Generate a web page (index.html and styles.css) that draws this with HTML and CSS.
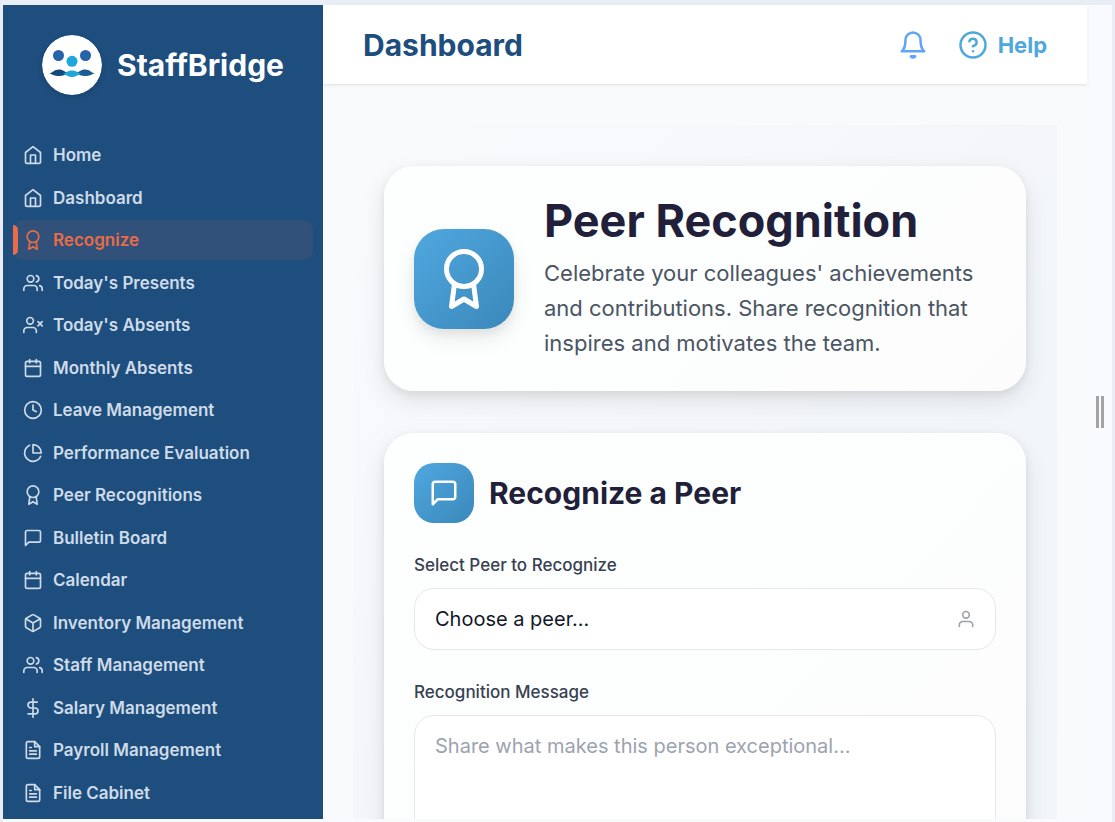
FILE: index.html
```html
<!DOCTYPE html>
<html lang="en">
<head>
<meta charset="utf-8">
<meta name="viewport" content="width=device-width, initial-scale=1">
<title>StaffBridge – Peer Recognition</title>
<link rel="stylesheet" href="styles.css">
</head>
<body>
<svg class="sprite" aria-hidden="true">
  <symbol id="home" viewBox="0 0 24 24"><path d="M3 9l9-7 9 7v11a2 2 0 0 1-2 2H5a2 2 0 0 1-2-2z"/><path d="M9 22V12h6v10"/></symbol>
  <symbol id="award" viewBox="0 0 24 24"><circle cx="12" cy="8" r="7"/><path d="M8.21 13.89L7 23l5-3 5 3-1.21-9.12"/></symbol>
  <symbol id="users" viewBox="0 0 24 24"><path d="M17 21v-2a4 4 0 0 0-4-4H5a4 4 0 0 0-4 4v2"/><circle cx="9" cy="7" r="4"/><path d="M23 21v-2a4 4 0 0 0-3-3.87M16 3.13a4 4 0 0 1 0 7.75"/></symbol>
  <symbol id="user-x" viewBox="0 0 24 24"><path d="M16 21v-2a4 4 0 0 0-4-4H5a4 4 0 0 0-4 4v2"/><circle cx="8.5" cy="7" r="4"/><path d="M18 8l5 5M23 8l-5 5"/></symbol>
  <symbol id="calendar" viewBox="0 0 24 24"><rect x="3" y="4" width="18" height="18" rx="2"/><path d="M16 2v4M8 2v4M3 10h18"/></symbol>
  <symbol id="clock" viewBox="0 0 24 24"><circle cx="12" cy="12" r="10"/><path d="M12 6v6l4 2"/></symbol>
  <symbol id="pie" viewBox="0 0 24 24"><path d="M21.21 15.89A10 10 0 1 1 8 2.83"/><path d="M22 12A10 10 0 0 0 12 2v10z"/></symbol>
  <symbol id="message" viewBox="0 0 24 24"><path d="M21 15a2 2 0 0 1-2 2H7l-4 4V5a2 2 0 0 1 2-2h14a2 2 0 0 1 2 2z"/></symbol>
  <symbol id="box" viewBox="0 0 24 24"><path d="M21 16V8a2 2 0 0 0-1-1.73l-7-4a2 2 0 0 0-2 0l-7 4A2 2 0 0 0 3 8v8a2 2 0 0 0 1 1.73l7 4a2 2 0 0 0 2 0l7-4A2 2 0 0 0 21 16z"/><path d="M3.27 6.96L12 12.01l8.73-5.05M12 22.08V12"/></symbol>
  <symbol id="dollar" viewBox="0 0 24 24"><path d="M12 1v22M17 5H9.500a3.500 3.500 0 0 0 0 7h5a3.500 3.500 0 0 1 0 7H6"/></symbol>
  <symbol id="file" viewBox="0 0 24 24"><path d="M14 2H6a2 2 0 0 0-2 2v16a2 2 0 0 0 2 2h12a2 2 0 0 0 2-2V8z"/><path d="M14 2v6h6M16 13H8M16 17H8M10 9H8"/></symbol>
  <symbol id="user" viewBox="0 0 24 24"><path d="M20 21v-2a4 4 0 0 0-4-4H8a4 4 0 0 0-4 4v2"/><circle cx="12" cy="7" r="4"/></symbol>
  <symbol id="bell" viewBox="0 0 24 24"><path d="M18 8A6 6 0 0 0 6 8c0 7-3 9-3 9h18s-3-2-3-9"/><path d="M13.730 21a2 2 0 0 1-3.460 0z"/></symbol>
  <symbol id="help" viewBox="0 0 24 24"><circle cx="12" cy="12" r="10"/><path d="M9.090 9a3 3 0 0 1 5.830 1c0 2-3 3-3 3M12 17h.01"/></symbol>
</svg>

<div class="app">
  <aside class="sidebar">
    <a class="brand" href="#">
      <svg class="brand-logo" viewBox="0 0 60 60" aria-hidden="true">
        <circle cx="30" cy="30" r="30" fill="#fff"/>
        <circle cx="16.500" cy="20.500" r="5.500" fill="#2563ab"/>
        <circle cx="43.500" cy="20.500" r="5.500" fill="#2563ab"/>
        <circle cx="30" cy="26.300" r="5.500" fill="#1ea7dc"/>
        <path d="M7.500 38.500C11 37.500 12 34.500 17 34.500C21 34.500 23 37 26 38C23 40 21 41 17 41C12 41 11 39.500 7.500 38.500z" fill="#114b7c"/>
        <path d="M52.500 38.500C49 37.500 48 34.500 43 34.500C39 34.500 37 37 34 38C37 40 39 41 43 41C48 41 49 39.500 52.500 38.500z" fill="#195d94"/>
        <path d="M21 38.500C24.500 38 25.500 35.500 30 35.500C34.500 35.500 35.500 38 39 38.500C35.500 39.500 34.500 42 30 42C25.500 42 24.500 39.500 21 38.500z" fill="#1ea7dc"/>
      </svg>
      <span>StaffBridge</span>
    </a>
    <nav class="nav" aria-label="Main">
      <a class="nav-item" href="#"><svg class="icon"><use href="#home"/></svg>Home</a>
      <a class="nav-item" href="#"><svg class="icon"><use href="#home"/></svg>Dashboard</a>
      <a class="nav-item active" href="#" aria-current="page"><svg class="icon"><use href="#award"/></svg>Recognize</a>
      <a class="nav-item" href="#"><svg class="icon"><use href="#users"/></svg>Today's Presents</a>
      <a class="nav-item" href="#"><svg class="icon"><use href="#user-x"/></svg>Today's Absents</a>
      <a class="nav-item" href="#"><svg class="icon"><use href="#calendar"/></svg>Monthly Absents</a>
      <a class="nav-item" href="#"><svg class="icon"><use href="#clock"/></svg>Leave Management</a>
      <a class="nav-item" href="#"><svg class="icon"><use href="#pie"/></svg>Performance Evaluation</a>
      <a class="nav-item" href="#"><svg class="icon"><use href="#award"/></svg>Peer Recognitions</a>
      <a class="nav-item" href="#"><svg class="icon"><use href="#message"/></svg>Bulletin Board</a>
      <a class="nav-item" href="#"><svg class="icon"><use href="#calendar"/></svg>Calendar</a>
      <a class="nav-item" href="#"><svg class="icon"><use href="#box"/></svg>Inventory Management</a>
      <a class="nav-item" href="#"><svg class="icon"><use href="#users"/></svg>Staff Management</a>
      <a class="nav-item" href="#"><svg class="icon"><use href="#dollar"/></svg>Salary Management</a>
      <a class="nav-item" href="#"><svg class="icon"><use href="#file"/></svg>Payroll Management</a>
      <a class="nav-item" href="#"><svg class="icon"><use href="#file"/></svg>File Cabinet</a>
    </nav>
  </aside>

  <div class="content">
    <header class="topbar">
      <div class="topbar-title">Dashboard</div>
      <div class="topbar-actions">
        <button class="bell" type="button" aria-label="Notifications"><svg class="icon icon-md"><use href="#bell"/></svg></button>
        <button class="help" type="button"><svg class="icon icon-md"><use href="#help"/></svg>Help</button>
      </div>
    </header>
    <main class="main">
      <div class="page">
        <section class="card hero">
          <div class="hero-badge"><svg class="icon icon-lg"><use href="#award"/></svg></div>
          <div class="hero-text">
            <h1>Peer Recognition</h1>
            <p>Celebrate your colleagues' achievements and contributions. Share recognition that inspires and motivates the team.</p>
          </div>
        </section>
        <section class="card">
          <div class="card-head">
            <div class="card-badge"><svg class="icon icon-md"><use href="#message"/></svg></div>
            <h2>Recognize a Peer</h2>
          </div>
          <form class="form">
            <div class="field">
              <label for="peer">Select Peer to Recognize</label>
              <div class="select-wrap">
                <select id="peer"><option>Choose a peer...</option></select>
                <svg class="icon select-icon"><use href="#user"/></svg>
              </div>
            </div>
            <div class="field">
              <label for="message-text">Recognition Message</label>
              <textarea id="message-text" placeholder="Share what makes this person exceptional..."></textarea>
            </div>
          </form>
        </section>
      </div>
    </main>
  </div>

  <div class="splitter" role="separator" aria-orientation="vertical"><span></span><span></span></div>
</div>
</body>
</html>
```
FILE: styles.css
```css
* {
  box-sizing: border-box;
}

body {
  margin: 0;
  height: 100vh;
  overflow: hidden;
  display: flex;
  padding: 5px 3px 0;
  background: #e8edf6;
  font-family: Inter, "Liberation Sans", sans-serif;
}

h1, h2, p {
  margin: 0;
}

a {
  text-decoration: none;
}

button {
  display: flex;
  align-items: center;
  gap: 10px;
  padding: 0;
  border: 0;
  background: none;
  font: inherit;
  cursor: pointer;
}

.sprite {
  display: none;
}

.icon {
  flex: none;
  width: 20px;
  height: 20px;
  fill: none;
  stroke: currentColor;
  stroke-width: 2;
  stroke-linecap: round;
  stroke-linejoin: round;
}

.icon-md {
  width: 30px;
  height: 30px;
}

.icon-lg {
  width: 60px;
  height: 60px;
}

.app {
  flex: 1;
  min-width: 0;
  display: flex;
  padding-bottom: 3px;
  background: #f9fafe;
}

/* Sidebar */

.sidebar {
  flex: none;
  width: 320px;
  display: flex;
  flex-direction: column;
  gap: 40px;
  padding: 30px 10px 6px;
  background: #1d4e7e;
}

.brand {
  display: flex;
  align-items: center;
  justify-content: center;
  gap: 15px;
  color: #fff;
  font-size: 30px;
  font-weight: 700;
}

.brand-logo {
  width: 60px;
  height: 60px;
  border-radius: 50%;
  box-shadow: 0 2px 5px rgba(0, 0, 0, 0.15);
}

.nav {
  flex: 1;
  display: flex;
  flex-direction: column;
  justify-content: space-between;
}

.nav-item {
  position: relative;
  display: flex;
  align-items: center;
  gap: 10px;
  height: 40px;
  padding: 0 10px;
  border-radius: 10px;
  color: #cfdbe8;
  font-size: 17px;
  font-weight: 600;
}

.nav-item.active {
  background: #32517a;
  color: #e96c46;
}

.nav-item.active::before {
  content: "";
  position: absolute;
  left: 0;
  top: 5px;
  bottom: 5px;
  width: 5px;
  border-radius: 0 5px 5px 0;
  background: #e96c46;
}

/* Content column */

.content {
  flex: 1;
  min-width: 0;
  display: flex;
  flex-direction: column;
  background: #f9fafc;
}

.topbar {
  flex: none;
  z-index: 1;
  display: flex;
  align-items: center;
  justify-content: space-between;
  height: 80px;
  padding: 0 40px;
  border-bottom: 1px solid #e5e7eb;
  background: #fff;
  box-shadow: 0 1px 3px rgba(0, 0, 0, 0.06);
}

.topbar-title {
  color: #1d4e7e;
  font-size: 30px;
  font-weight: 700;
}

.topbar-actions {
  display: flex;
  align-items: center;
  gap: 30px;
}

.bell {
  color: #60a5fa;
}

.help {
  color: #4fa8dd;
  font-size: 22px;
  font-weight: 700;
}

.main {
  flex: 1;
  min-height: 0;
  overflow: hidden;
  padding: 40px 30px 0;
}

.page {
  display: flex;
  flex-direction: column;
  gap: 42px;
  padding: 41px 31px;
  background: linear-gradient(135deg, #f9fafc 0%, #f2f5f9 60%, #f1f5f9 100%);
}

.card {
  padding: 30px;
  border-radius: 30px;
  background: linear-gradient(135deg, #fdfffe, #fcfcfd);
  box-shadow: 0 10px 25px rgba(0, 0, 0, 0.09), 0 3px 8px rgba(0, 0, 0, 0.07);
}

.hero {
  display: flex;
  align-items: center;
  gap: 30px;
}

.hero-badge,
.card-badge {
  flex: none;
  display: grid;
  place-items: center;
  color: #fff;
  background: linear-gradient(135deg, #4fa8df, #3b88ba);
}

.hero-badge {
  width: 100px;
  height: 100px;
  border-radius: 30px;
  box-shadow: 0 10px 20px rgba(0, 0, 0, 0.08), 0 4px 8px rgba(0, 0, 0, 0.06);
}

.card-badge {
  width: 60px;
  height: 60px;
  border-radius: 20px;
}

.hero-text {
  display: grid;
  gap: 10px;
}

h1 {
  color: #221f3b;
  font-size: 45px;
  line-height: 50px;
  font-weight: 700;
}

.hero-text p {
  color: #4b5563;
  font-size: 22px;
  line-height: 35px;
}

.card-head {
  display: flex;
  align-items: center;
  gap: 15px;
}

h2 {
  color: #221f3b;
  font-size: 30px;
  font-weight: 700;
}

/* Form */

.form {
  display: grid;
  gap: 30px;
  padding-top: 30px;
}

.field {
  display: grid;
  gap: 10px;
}

label {
  color: #374151;
  font-size: 17px;
  line-height: 25px;
  font-weight: 500;
}

.select-wrap {
  position: relative;
  display: grid;
}

.select-icon {
  position: absolute;
  right: 20px;
  top: 21px;
  color: #9ca3af;
  pointer-events: none;
}

select,
textarea {
  width: 100%;
  border: 1px solid #e5e7eb;
  border-radius: 20px;
  background: #fff;
  color: #111827;
  font-family: inherit;
  font-size: 20px;
  line-height: 30px;
}

select {
  height: 62px;
  padding: 0 50px 0 20px;
  appearance: none;
}

textarea {
  height: 180px;
  padding: 15px 20px;
  resize: none;
}

textarea::placeholder {
  color: #9ca3af;
}

/* Resize handle */

.splitter {
  flex: none;
  width: 25px;
  display: flex;
  align-items: center;
  justify-content: center;
  gap: 2px;
  cursor: col-resize;
}

.splitter span {
  width: 3px;
  height: 32px;
  background: #a3a3a3;
}
```
